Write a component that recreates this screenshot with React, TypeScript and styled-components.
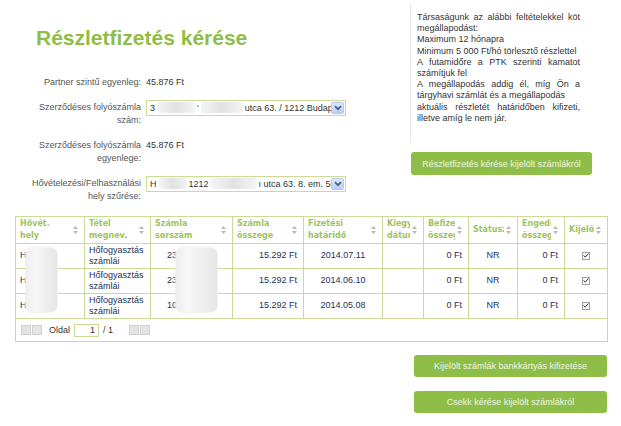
import { createGlobalStyle, styled } from "styled-components";

const GlobalStyle = createGlobalStyle`
  html, body {
    margin: 0;
    padding: 0;
    background: #ffffff;
  }
  body {
    font-family: "Liberation Sans", Arial, sans-serif;
    color: #333333;
  }
`;

const green = "#8fbe48";
const lineGreen = "#cadb98";

type Row = {
  place: string;
  number: string;
  amount: string;
  due: string;
};

const rows: Row[] = [
  { place: "H", number: "23", amount: "15.292 Ft", due: "2014.07.11" },
  { place: "H", number: "23", amount: "15.292 Ft", due: "2014.06.10" },
  { place: "H", number: "10", amount: "15.292 Ft", due: "2014.05.08" },
];

const columns = [
  { title: "Hővét. hely", width: 69 },
  { title: "Tétel megnev.", width: 66 },
  { title: "Számla sorszám", width: 82 },
  { title: "Számla összege", width: 71 },
  { title: "Fizetési határidő", width: 79 },
  { title: "Kiegy dátum", width: 41 },
  { title: "Befizet összeg", width: 45 },
  { title: "Státusz", width: 49 },
  { title: "Engedm összeg", width: 47 },
  { title: "Kijelölés", width: 43 },
];

function SortIcon() {
  return (
    <SortSvg width="5" height="8" viewBox="0 0 5 8">
      <path d="M2.5 0 L5 3 L0 3 Z" fill="#b8b8b8" />
      <path d="M0 5 L5 5 L2.5 8 Z" fill="#b8b8b8" />
    </SortSvg>
  );
}

function SelectBox({ children }: { children: React.ReactNode }) {
  return (
    <Select>
      <SelectText>{children}</SelectText>
      <DropButton>
        <svg width="8" height="6" viewBox="0 0 8 6">
          <path d="M1 1.2 L4 4.2 L7 1.2" fill="none" stroke="#4a5d86" strokeWidth="1.8" />
        </svg>
      </DropButton>
    </Select>
  );
}

function App() {
  return (
    <Page>
      <GlobalStyle />
      <Top>
        <LeftColumn>
          <Title>Részletfizetés kérése</Title>
          <Form>
            <Label>Partner szintű egyenleg:</Label>
            <Value>45.876 Ft</Value>

            <Label>
              Szerződéses folyószámla
              <br />
              szám:
            </Label>
            <SelectBox>
              3<Blur $w={38} />'<Blur $w={42} />utca 63. / 1212 Budapest
            </SelectBox>

            <Label>
              Szerződéses folyószámla
              <br />
              egyenlege:
            </Label>
            <Value>45.876 Ft</Value>

            <Label>
              Hővételezési/Felhasználási
              <br />
              hely szűrése:
            </Label>
            <SelectBox>
              H<Blur $w={28} />1212<Blur $w={46} />ı utca 63. 8. em. 50
            </SelectBox>
          </Form>
        </LeftColumn>
        <RightColumn>
          <InfoBox>
            <p>Társaságunk az alábbi feltételekkel köt megállapodást:</p>
            <p>Maximum 12 hónapra</p>
            <p>Minimum 5 000 Ft/hó törlesztő részlettel</p>
            <p>A futamidőre a PTK szerinti kamatot számítjuk fel</p>
            <p>
              A megállapodás addig él, míg Ön a tárgyhavi számlát és a megállapodás
              <br />
              aktuális részletét határidőben kifizeti, illetve amíg le nem jár.
            </p>
          </InfoBox>
          <GreenButton $width={181}>Részletfizetés kérése kijelölt számlákról</GreenButton>
        </RightColumn>
      </Top>

      <TableWrap>
        <Table>
          <colgroup>
            {columns.map((c) => (
              <col key={c.title} style={{ width: c.width }} />
            ))}
          </colgroup>
          <thead>
            <tr>
              {columns.map((c) => (
                <Th key={c.title}>
                  <HeadInner>
                    <HeadText>{c.title}</HeadText>
                    <SortIcon />
                  </HeadInner>
                </Th>
              ))}
            </tr>
          </thead>
          <tbody>
            {rows.map((r, i) => (
              <tr key={i}>
                <Td>{r.place}</Td>
                <Td>
                  Hőfogyasztás
                  <br />
                  számlái
                </Td>
                <Td $indent={16}>{r.number}</Td>
                <Td $align="right">{r.amount}</Td>
                <Td $align="center">{r.due}</Td>
                <Td />
                <Td $align="right">0 Ft</Td>
                <Td $align="center">NR</Td>
                <Td $align="right">0 Ft</Td>
                <Td $align="center">
                  <Check>
                    <svg width="6" height="5" viewBox="0 0 6 5">
                      <path d="M0.6 2.4 L2.2 4.1 L5.4 0.6" fill="none" stroke="#333" strokeWidth="1" />
                    </svg>
                  </Check>
                </Td>
              </tr>
            ))}
            <tr>
              <PagerCell colSpan={10}>
                <Pager>
                  <NavPair>
                    <NavBtn />
                    <NavBtn />
                  </NavPair>
                  <span>Oldal</span>
                  <PageInput>1</PageInput>
                  <span>/ 1</span>
                  <NavPair $gap={12}>
                    <NavBtn />
                    <NavBtn />
                  </NavPair>
                </Pager>
              </PagerCell>
            </tr>
          </tbody>
        </Table>
        <Redaction $left={11} $width={31} />
        <Redaction $left={161} $width={41} />
      </TableWrap>

      <Actions>
        <GreenButton $width={193}>Kijelölt számlák bankkártyás kifizetése</GreenButton>
        <GreenButton $width={193}>Csekk kérése kijelölt számlákról</GreenButton>
      </Actions>
    </Page>
  );
}

export default App;

const Page = styled.div`
  width: 621px;
  height: 426px;
  overflow: hidden;
  box-sizing: border-box;
  font-size: 9px;
`;

const Top = styled.div`
  display: flex;
  height: 216px;
`;

const LeftColumn = styled.div`
  width: 410px;
  box-sizing: border-box;
  padding-top: 25px;
`;

const Title = styled.h1`
  margin: 0 0 0 36px;
  font-family: "Liberation Sans", Arial, sans-serif;
  font-size: 21px;
  font-weight: bold;
  line-height: 26px;
  color: ${green};
`;

const Form = styled.div`
  display: grid;
  grid-template-columns: 121px 200px;
  column-gap: 5px;
  row-gap: 11px;
  margin-top: 25px;
  padding-left: 20px;
  align-items: start;
`;

const Label = styled.div`
  text-align: right;
  color: #555555;
  line-height: 13.5px;
`;

const Value = styled.div`
  color: #333;
  line-height: 13.5px;
`;

const Select = styled.div`
  display: flex;
  align-items: center;
  height: 16px;
  margin-top: -1px;
  box-sizing: border-box;
  border: 1px solid ${lineGreen};
  background: #fff;
  padding: 0 1px 0 3px;
`;

const SelectText = styled.div`
  flex: 1;
  overflow: hidden;
  white-space: nowrap;
  color: #333;
  font-size: 9px;
  display: flex;
  align-items: center;
`;

const Blur = styled.span<{ $w: number }>`
  display: inline-block;
  flex: none;
  width: ${(p) => p.$w}px;
  height: 11px;
  margin: 0 2px;
  border-radius: 2px;
  background: linear-gradient(90deg, #f4f4f4, #e2e2e2 50%, #f4f4f4);
`;

const DropButton = styled.div`
  flex: none;
  width: 13px;
  height: 12px;
  display: flex;
  align-items: center;
  justify-content: center;
  border: 1px solid #b7c8ef;
  border-radius: 2px;
  box-sizing: border-box;
  background: linear-gradient(#dfe8fd, #bccdf6);
`;

const RightColumn = styled.div`
  display: flex;
  flex-direction: column;
  align-items: flex-start;
  padding-top: 5px;
`;

const InfoBox = styled.div`
  width: 200px;
  height: 138px;
  box-sizing: border-box;
  border-left: 1px solid #e6e6e6;
  padding: 7px 30px 0 6px;
  color: #333;
  font-size: 9px;
  line-height: 11.2px;
  text-align: justify;

  p {
    margin: 0;
  }
`;

const GreenButton = styled.div<{ $width: number }>`
  width: ${(p) => p.$width}px;
  height: 23px;
  display: flex;
  align-items: center;
  justify-content: center;
  border-radius: 3px;
  background: ${green};
  color: #eef5e2;
  font-size: 9px;
  white-space: nowrap;

  ${RightColumn} & {
    margin-top: 9px;
    margin-left: 1px;
  }
`;

const TableWrap = styled.div`
  position: relative;
  margin-left: 15px;
  width: 592px;
`;

const Table = styled.table`
  width: 592px;
  table-layout: fixed;
  border-collapse: collapse;
  font-size: 9px;
`;

const Th = styled.th`
  height: 27px;
  padding: 0 4px 0 4px;
  border: 1px solid ${lineGreen};
  text-align: left;
  vertical-align: middle;
  box-sizing: border-box;
`;

const HeadInner = styled.div`
  display: flex;
  align-items: center;
  gap: 2px;
`;

const HeadText = styled.div`
  flex: 1;
  min-width: 0;
  max-height: 24px;
  overflow: hidden;
  font-family: "DejaVu Sans", Verdana, sans-serif;
  font-size: 8px;
  font-weight: bold;
  line-height: 12px;
  color: #9cc55a;
`;

const SortSvg = styled.svg`
  flex: none;
  margin-right: 2px;
`;

const Td = styled.td<{ $align?: "left" | "right" | "center"; $indent?: number }>`
  height: 25px;
  padding: 0 ${(p) => (p.$align === "right" ? 6 : 4)}px 0 ${(p) => p.$indent ?? 4}px;
  border: 1px solid ${lineGreen};
  text-align: ${(p) => p.$align ?? "left"};
  vertical-align: middle;
  color: #1d3158;
  line-height: 11.5px;
  box-sizing: border-box;
  white-space: nowrap;
  overflow: hidden;
`;

const Check = styled.span`
  display: inline-flex;
  align-items: center;
  justify-content: center;
  width: 8px;
  height: 8px;
  box-sizing: border-box;
  border: 1px solid #a0a0a0;
  background: #f6f6f6;
  vertical-align: middle;
`;

const PagerCell = styled.td`
  height: 23px;
  padding: 0 5px;
  border: 1px solid ${lineGreen};
  vertical-align: middle;
  box-sizing: border-box;
`;

const Pager = styled.div`
  display: flex;
  align-items: center;
  gap: 4px;
  color: #333;
`;

const NavPair = styled.div<{ $gap?: number }>`
  display: flex;
  gap: 1px;
  margin-left: ${(p) => p.$gap ?? 0}px;
  margin-right: 3px;
`;

const NavBtn = styled.span`
  width: 10px;
  height: 10px;
  box-sizing: border-box;
  border: 1px solid #cfcfcf;
  background: #e4e4e4;
`;

const PageInput = styled.span`
  width: 25px;
  height: 13px;
  box-sizing: border-box;
  border: 1px solid ${lineGreen};
  text-align: right;
  padding-right: 3px;
  line-height: 11px;
`;

const Redaction = styled.div<{ $left: number; $width: number }>`
  position: absolute;
  top: 32px;
  left: ${(p) => p.$left}px;
  width: ${(p) => p.$width}px;
  height: 64px;
  border-radius: 6px;
  background: linear-gradient(90deg, #eeeeee, #f7f7f7 30%, #e6e6e6);
  box-shadow: 0 0 2px 1px #f0f0f0;
`;

const Actions = styled.div`
  display: flex;
  flex-direction: column;
  align-items: flex-end;
  gap: 14px;
  margin-top: 13px;
  padding-right: 14px;

  ${GreenButton} {
    height: 22px;
  }
`;
